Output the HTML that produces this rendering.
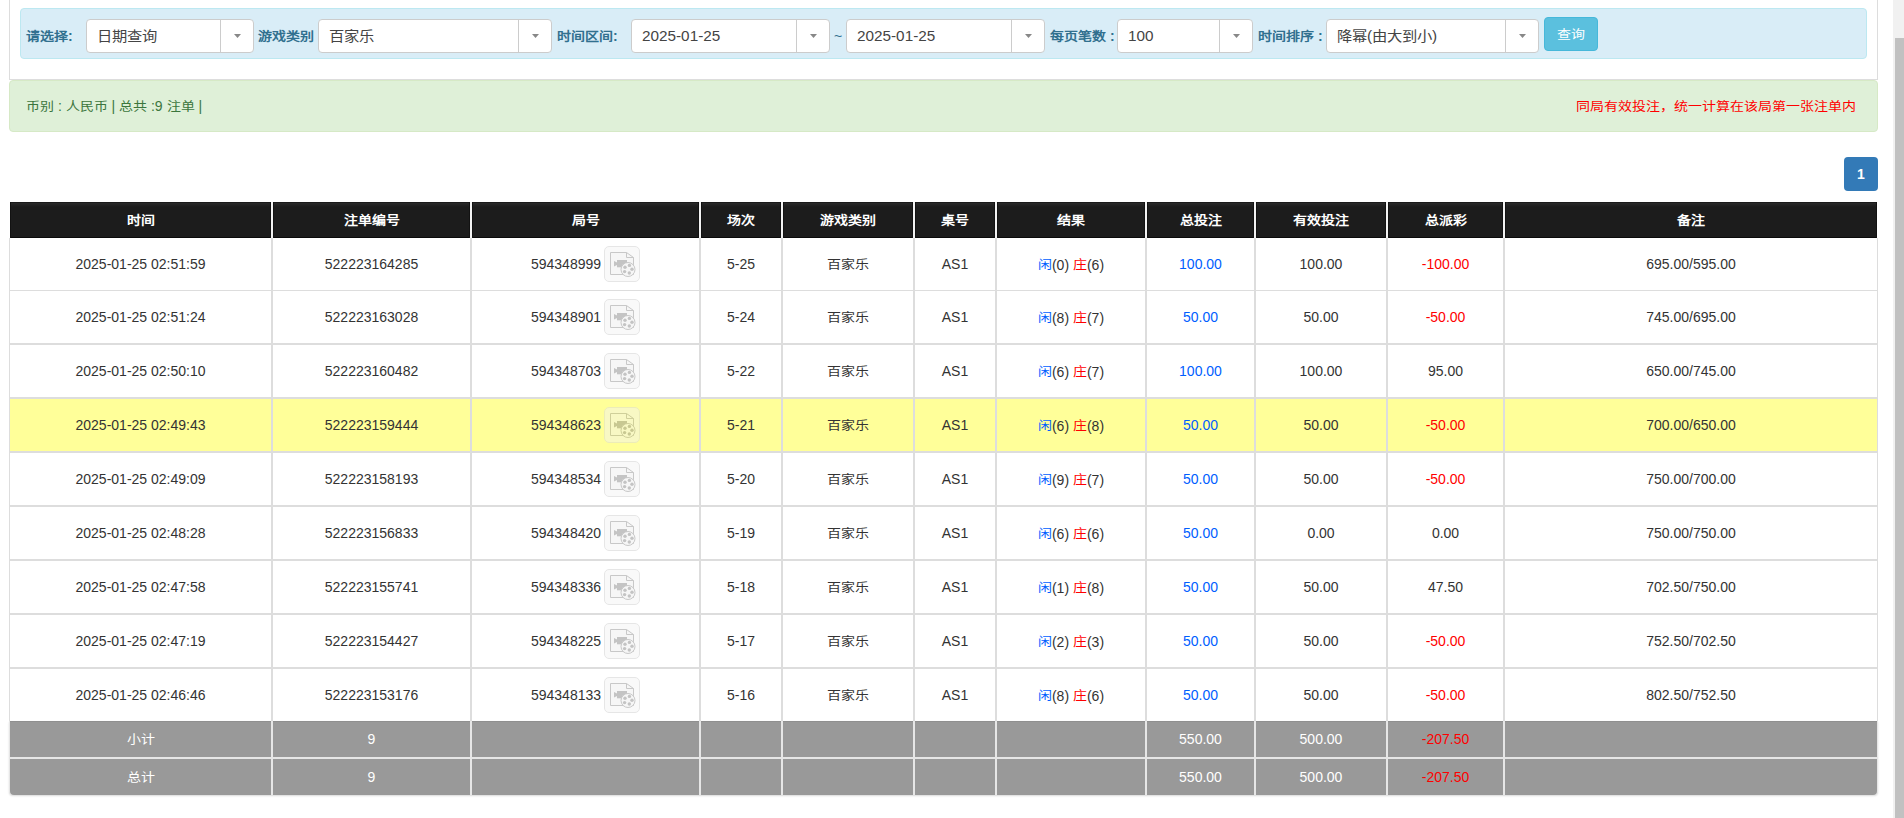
<!DOCTYPE html><html lang="zh-CN"><head><meta charset="utf-8"><title>注单查询</title><style>
html,body{margin:0;padding:0;}
body{width:1904px;height:818px;overflow:hidden;position:relative;background:#fff;font-family:"Liberation Sans", sans-serif;font-size:14px;color:#333;}
.c{position:absolute;display:flex;align-items:center;justify-content:center;white-space:nowrap;}
.lbl{position:absolute;top:19px;height:34px;line-height:34px;font-weight:bold;color:#31708f;font-size:14px;white-space:nowrap;}
.sel{position:absolute;top:19px;height:34px;box-sizing:border-box;border:1px solid #ccc;border-radius:4px;background:#fff;}
.sel .t{position:absolute;left:10px;top:0;line-height:32px;font-size:15.3px;color:#444;white-space:nowrap;}
.sel .d{position:absolute;right:32px;top:0;bottom:0;width:1px;background:#ccc;}
.sel .a{position:absolute;right:12px;top:14px;width:7px;height:4px;}
.z{display:inline-block;transform:translateY(0.5px) scale(1,0.87);}
.c .z{transform:translateY(-0.5px) scale(1,0.87);}
.blue{color:#005eff;}
.red{color:#f00;}
</style></head><body>
<div style="position:absolute;left:9px;top:-10px;width:1869px;height:90px;box-sizing:border-box;border:1px solid #ddd;border-top:none;background:#fff;"></div>
<div style="position:absolute;left:20px;top:8px;width:1847px;height:51px;box-sizing:border-box;border:1px solid #bce8f1;border-radius:4px;background:#d9edf7;"></div>
<div class="lbl" style="left:26px;"><span class="z">请选择</span>:</div>
<div class="lbl" style="left:258px;"><span class="z">游戏类别</span></div>
<div class="lbl" style="left:557px;"><span class="z">时间区间</span>:</div>
<div class="lbl" style="left:1050px;"><span class="z">每页笔数</span> :</div>
<div class="lbl" style="left:1258px;"><span class="z">时间排序</span> :</div>
<div class="lbl" style="left:834px;font-weight:normal;">~</div>
<div class="sel" style="left:86px;width:168px;"><div class="t"><span class="z">日期查询</span></div><div class="d"></div><svg class="a" viewBox="0 0 7 4"><polygon points="0,0 7,0 3.5,4" fill="#888"/></svg></div>
<div class="sel" style="left:318px;width:234px;"><div class="t"><span class="z">百家乐</span></div><div class="d"></div><svg class="a" viewBox="0 0 7 4"><polygon points="0,0 7,0 3.5,4" fill="#888"/></svg></div>
<div class="sel" style="left:631px;width:199px;"><div class="t">2025-01-25</div><div class="d"></div><svg class="a" viewBox="0 0 7 4"><polygon points="0,0 7,0 3.5,4" fill="#888"/></svg></div>
<div class="sel" style="left:846px;width:199px;"><div class="t">2025-01-25</div><div class="d"></div><svg class="a" viewBox="0 0 7 4"><polygon points="0,0 7,0 3.5,4" fill="#888"/></svg></div>
<div class="sel" style="left:1117px;width:136px;"><div class="t">100</div><div class="d"></div><svg class="a" viewBox="0 0 7 4"><polygon points="0,0 7,0 3.5,4" fill="#888"/></svg></div>
<div class="sel" style="left:1326px;width:213px;"><div class="t"><span class="z">降幂</span>(<span class="z">由大到小</span>)</div><div class="d"></div><svg class="a" viewBox="0 0 7 4"><polygon points="0,0 7,0 3.5,4" fill="#888"/></svg></div>
<div style="position:absolute;left:1544px;top:17px;width:54px;height:34px;box-sizing:border-box;border:1px solid #46b8da;border-radius:4px;background:#5bc0de;color:#fff;font-size:14px;line-height:32px;text-align:center;"><span class="z">查询</span></div>
<div style="position:absolute;left:9px;top:80px;width:1869px;height:52px;box-sizing:border-box;border:1px solid #d6e9c6;border-radius:4px;background:#dff0d8;"></div>
<div style="position:absolute;left:26px;top:80px;width:600px;height:52px;line-height:52px;color:#3c763d;white-space:nowrap;"><span class="z">币别</span> : <span class="z">人民币</span> | <span class="z">总共</span> :9 <span class="z">注单</span> |</div>
<div style="position:absolute;left:1456px;top:80px;width:400px;height:52px;line-height:52px;color:#f00;white-space:nowrap;text-align:right;"><span class="z">同局有效投注，统一计算在该局第一张注单内</span></div>
<div style="position:absolute;left:1844px;top:157px;width:34px;height:34px;box-sizing:border-box;border-radius:4px;background:#337ab7;color:#fff;font-size:14px;font-weight:bold;line-height:34px;text-align:center;">1</div>
<div style="position:absolute;left:9px;top:202px;width:1869px;height:36px;background:#f2f2f2;"></div>
<div style="position:absolute;left:9px;top:202px;width:1px;height:36px;background:#fff;"></div>
<div style="position:absolute;left:1877px;top:202px;width:1px;height:36px;background:#fff;"></div>
<div class="c" style="left:10px;top:202px;width:261px;height:36px;background:linear-gradient(#1a1a1a 0,#1a1a1a 1px,#2a2a2a 1px,#222 3px,#1c1c1c 5px);box-shadow:inset 1px 0 #121212,inset -1px 0 #121212,inset 0 -1px #0a0a0a;color:#fff;font-weight:bold;box-sizing:border-box;"><span class="z">时间</span></div>
<div class="c" style="left:273px;top:202px;width:197px;height:36px;background:linear-gradient(#1a1a1a 0,#1a1a1a 1px,#2a2a2a 1px,#222 3px,#1c1c1c 5px);box-shadow:inset 1px 0 #121212,inset -1px 0 #121212,inset 0 -1px #0a0a0a;color:#fff;font-weight:bold;box-sizing:border-box;"><span class="z">注单编号</span></div>
<div class="c" style="left:472px;top:202px;width:227px;height:36px;background:linear-gradient(#1a1a1a 0,#1a1a1a 1px,#2a2a2a 1px,#222 3px,#1c1c1c 5px);box-shadow:inset 1px 0 #121212,inset -1px 0 #121212,inset 0 -1px #0a0a0a;color:#fff;font-weight:bold;box-sizing:border-box;"><span class="z">局号</span></div>
<div class="c" style="left:701px;top:202px;width:80px;height:36px;background:linear-gradient(#1a1a1a 0,#1a1a1a 1px,#2a2a2a 1px,#222 3px,#1c1c1c 5px);box-shadow:inset 1px 0 #121212,inset -1px 0 #121212,inset 0 -1px #0a0a0a;color:#fff;font-weight:bold;box-sizing:border-box;"><span class="z">场次</span></div>
<div class="c" style="left:783px;top:202px;width:130px;height:36px;background:linear-gradient(#1a1a1a 0,#1a1a1a 1px,#2a2a2a 1px,#222 3px,#1c1c1c 5px);box-shadow:inset 1px 0 #121212,inset -1px 0 #121212,inset 0 -1px #0a0a0a;color:#fff;font-weight:bold;box-sizing:border-box;"><span class="z">游戏类别</span></div>
<div class="c" style="left:915px;top:202px;width:80px;height:36px;background:linear-gradient(#1a1a1a 0,#1a1a1a 1px,#2a2a2a 1px,#222 3px,#1c1c1c 5px);box-shadow:inset 1px 0 #121212,inset -1px 0 #121212,inset 0 -1px #0a0a0a;color:#fff;font-weight:bold;box-sizing:border-box;"><span class="z">桌号</span></div>
<div class="c" style="left:997px;top:202px;width:148px;height:36px;background:linear-gradient(#1a1a1a 0,#1a1a1a 1px,#2a2a2a 1px,#222 3px,#1c1c1c 5px);box-shadow:inset 1px 0 #121212,inset -1px 0 #121212,inset 0 -1px #0a0a0a;color:#fff;font-weight:bold;box-sizing:border-box;"><span class="z">结果</span></div>
<div class="c" style="left:1147px;top:202px;width:107px;height:36px;background:linear-gradient(#1a1a1a 0,#1a1a1a 1px,#2a2a2a 1px,#222 3px,#1c1c1c 5px);box-shadow:inset 1px 0 #121212,inset -1px 0 #121212,inset 0 -1px #0a0a0a;color:#fff;font-weight:bold;box-sizing:border-box;"><span class="z">总投注</span></div>
<div class="c" style="left:1256px;top:202px;width:130px;height:36px;background:linear-gradient(#1a1a1a 0,#1a1a1a 1px,#2a2a2a 1px,#222 3px,#1c1c1c 5px);box-shadow:inset 1px 0 #121212,inset -1px 0 #121212,inset 0 -1px #0a0a0a;color:#fff;font-weight:bold;box-sizing:border-box;"><span class="z">有效投注</span></div>
<div class="c" style="left:1388px;top:202px;width:115px;height:36px;background:linear-gradient(#1a1a1a 0,#1a1a1a 1px,#2a2a2a 1px,#222 3px,#1c1c1c 5px);box-shadow:inset 1px 0 #121212,inset -1px 0 #121212,inset 0 -1px #0a0a0a;color:#fff;font-weight:bold;box-sizing:border-box;"><span class="z">总派彩</span></div>
<div class="c" style="left:1505px;top:202px;width:372px;height:36px;background:linear-gradient(#1a1a1a 0,#1a1a1a 1px,#2a2a2a 1px,#222 3px,#1c1c1c 5px);box-shadow:inset 1px 0 #121212,inset -1px 0 #121212,inset 0 -1px #0a0a0a;color:#fff;font-weight:bold;box-sizing:border-box;"><span class="z">备注</span></div>
<div style="position:absolute;left:9px;top:238px;width:1869px;height:483px;background:#ddd;"></div>
<div class="c" style="left:10px;top:238px;width:261px;height:52px;background:#fff;"><span style="white-space:pre">2025-01-25 02:51:59</span></div>
<div class="c" style="left:273px;top:238px;width:197px;height:52px;background:#fff;"><span style="white-space:pre">522223164285</span></div>
<div class="c" style="left:472px;top:238px;width:227px;height:52px;background:#fff;"><span style="display:flex;align-items:center;white-space:pre"><span>594348999</span><span style="margin-left:3px;display:inline-block;"><svg width="36" height="36" viewBox="0 0 36 36" style="display:block"><rect x="0.5" y="0.5" width="35" height="35" rx="4.5" fill="#f9f9f9" stroke="#e6e6e6"/><path d="M6.5 6.5H22.5L29.5 11.5V28.5H6.5Z" fill="#f6f6f6" stroke="#c8c8c8"/><path d="M22.5 6.5V11.5H29.5" fill="none" stroke="#c8c8c8"/><path d="M10 15L13 16.5V19L10 20.5Z" fill="#c4c4c4"/><rect x="13" y="14" width="10" height="7.3" fill="#c4c4c4"/><circle cx="24" cy="23.5" r="7" fill="#f6f6f6" stroke="#c8c8c8"/><g fill="#c4c4c4"><circle cx="21" cy="21.3" r="1.7"/><circle cx="25.4" cy="19.4" r="1.7"/><circle cx="28" cy="23.2" r="1.7"/><circle cx="25.3" cy="27" r="1.7"/><circle cx="20.6" cy="25.6" r="1.7"/></g></svg></span></span></div>
<div class="c" style="left:701px;top:238px;width:80px;height:52px;background:#fff;"><span style="white-space:pre">5-25</span></div>
<div class="c" style="left:783px;top:238px;width:130px;height:52px;background:#fff;"><span style="white-space:pre"><span class="z">百家乐</span></span></div>
<div class="c" style="left:915px;top:238px;width:80px;height:52px;background:#fff;"><span style="white-space:pre">AS1</span></div>
<div class="c" style="left:997px;top:238px;width:148px;height:52px;background:#fff;"><span style="white-space:pre"><span class="blue"><span class="z">闲</span></span>(0) <span class="red"><span class="z">庄</span></span>(6)</span></div>
<div class="c" style="left:1147px;top:238px;width:107px;height:52px;background:#fff;"><span style="white-space:pre"><span class="blue">100.00</span></span></div>
<div class="c" style="left:1256px;top:238px;width:130px;height:52px;background:#fff;"><span style="white-space:pre">100.00</span></div>
<div class="c" style="left:1388px;top:238px;width:115px;height:52px;background:#fff;"><span style="white-space:pre"><span class="red">-100.00</span></span></div>
<div class="c" style="left:1505px;top:238px;width:372px;height:52px;background:#fff;"><span style="white-space:pre">695.00/595.00</span></div>
<div class="c" style="left:10px;top:291px;width:261px;height:52px;background:#fff;"><span style="white-space:pre">2025-01-25 02:51:24</span></div>
<div class="c" style="left:273px;top:291px;width:197px;height:52px;background:#fff;"><span style="white-space:pre">522223163028</span></div>
<div class="c" style="left:472px;top:291px;width:227px;height:52px;background:#fff;"><span style="display:flex;align-items:center;white-space:pre"><span>594348901</span><span style="margin-left:3px;display:inline-block;"><svg width="36" height="36" viewBox="0 0 36 36" style="display:block"><rect x="0.5" y="0.5" width="35" height="35" rx="4.5" fill="#f9f9f9" stroke="#e6e6e6"/><path d="M6.5 6.5H22.5L29.5 11.5V28.5H6.5Z" fill="#f6f6f6" stroke="#c8c8c8"/><path d="M22.5 6.5V11.5H29.5" fill="none" stroke="#c8c8c8"/><path d="M10 15L13 16.5V19L10 20.5Z" fill="#c4c4c4"/><rect x="13" y="14" width="10" height="7.3" fill="#c4c4c4"/><circle cx="24" cy="23.5" r="7" fill="#f6f6f6" stroke="#c8c8c8"/><g fill="#c4c4c4"><circle cx="21" cy="21.3" r="1.7"/><circle cx="25.4" cy="19.4" r="1.7"/><circle cx="28" cy="23.2" r="1.7"/><circle cx="25.3" cy="27" r="1.7"/><circle cx="20.6" cy="25.6" r="1.7"/></g></svg></span></span></div>
<div class="c" style="left:701px;top:291px;width:80px;height:52px;background:#fff;"><span style="white-space:pre">5-24</span></div>
<div class="c" style="left:783px;top:291px;width:130px;height:52px;background:#fff;"><span style="white-space:pre"><span class="z">百家乐</span></span></div>
<div class="c" style="left:915px;top:291px;width:80px;height:52px;background:#fff;"><span style="white-space:pre">AS1</span></div>
<div class="c" style="left:997px;top:291px;width:148px;height:52px;background:#fff;"><span style="white-space:pre"><span class="blue"><span class="z">闲</span></span>(8) <span class="red"><span class="z">庄</span></span>(7)</span></div>
<div class="c" style="left:1147px;top:291px;width:107px;height:52px;background:#fff;"><span style="white-space:pre"><span class="blue">50.00</span></span></div>
<div class="c" style="left:1256px;top:291px;width:130px;height:52px;background:#fff;"><span style="white-space:pre">50.00</span></div>
<div class="c" style="left:1388px;top:291px;width:115px;height:52px;background:#fff;"><span style="white-space:pre"><span class="red">-50.00</span></span></div>
<div class="c" style="left:1505px;top:291px;width:372px;height:52px;background:#fff;"><span style="white-space:pre">745.00/695.00</span></div>
<div class="c" style="left:10px;top:345px;width:261px;height:52px;background:#fff;"><span style="white-space:pre">2025-01-25 02:50:10</span></div>
<div class="c" style="left:273px;top:345px;width:197px;height:52px;background:#fff;"><span style="white-space:pre">522223160482</span></div>
<div class="c" style="left:472px;top:345px;width:227px;height:52px;background:#fff;"><span style="display:flex;align-items:center;white-space:pre"><span>594348703</span><span style="margin-left:3px;display:inline-block;"><svg width="36" height="36" viewBox="0 0 36 36" style="display:block"><rect x="0.5" y="0.5" width="35" height="35" rx="4.5" fill="#f9f9f9" stroke="#e6e6e6"/><path d="M6.5 6.5H22.5L29.5 11.5V28.5H6.5Z" fill="#f6f6f6" stroke="#c8c8c8"/><path d="M22.5 6.5V11.5H29.5" fill="none" stroke="#c8c8c8"/><path d="M10 15L13 16.5V19L10 20.5Z" fill="#c4c4c4"/><rect x="13" y="14" width="10" height="7.3" fill="#c4c4c4"/><circle cx="24" cy="23.5" r="7" fill="#f6f6f6" stroke="#c8c8c8"/><g fill="#c4c4c4"><circle cx="21" cy="21.3" r="1.7"/><circle cx="25.4" cy="19.4" r="1.7"/><circle cx="28" cy="23.2" r="1.7"/><circle cx="25.3" cy="27" r="1.7"/><circle cx="20.6" cy="25.6" r="1.7"/></g></svg></span></span></div>
<div class="c" style="left:701px;top:345px;width:80px;height:52px;background:#fff;"><span style="white-space:pre">5-22</span></div>
<div class="c" style="left:783px;top:345px;width:130px;height:52px;background:#fff;"><span style="white-space:pre"><span class="z">百家乐</span></span></div>
<div class="c" style="left:915px;top:345px;width:80px;height:52px;background:#fff;"><span style="white-space:pre">AS1</span></div>
<div class="c" style="left:997px;top:345px;width:148px;height:52px;background:#fff;"><span style="white-space:pre"><span class="blue"><span class="z">闲</span></span>(6) <span class="red"><span class="z">庄</span></span>(7)</span></div>
<div class="c" style="left:1147px;top:345px;width:107px;height:52px;background:#fff;"><span style="white-space:pre"><span class="blue">100.00</span></span></div>
<div class="c" style="left:1256px;top:345px;width:130px;height:52px;background:#fff;"><span style="white-space:pre">100.00</span></div>
<div class="c" style="left:1388px;top:345px;width:115px;height:52px;background:#fff;"><span style="white-space:pre"><span class="">95.00</span></span></div>
<div class="c" style="left:1505px;top:345px;width:372px;height:52px;background:#fff;"><span style="white-space:pre">650.00/745.00</span></div>
<div class="c" style="left:10px;top:399px;width:261px;height:52px;background:#ffff99;"><span style="white-space:pre">2025-01-25 02:49:43</span></div>
<div class="c" style="left:273px;top:399px;width:197px;height:52px;background:#ffff99;"><span style="white-space:pre">522223159444</span></div>
<div class="c" style="left:472px;top:399px;width:227px;height:52px;background:#ffff99;"><span style="display:flex;align-items:center;white-space:pre"><span>594348623</span><span style="margin-left:3px;display:inline-block;"><svg width="36" height="36" viewBox="0 0 36 36" style="display:block"><rect x="0.5" y="0.5" width="35" height="35" rx="4.5" fill="#f8f8c4" stroke="#ececb8"/><path d="M6.5 6.5H22.5L29.5 11.5V28.5H6.5Z" fill="#f8f8c4" stroke="#cfcf9a"/><path d="M22.5 6.5V11.5H29.5" fill="none" stroke="#cfcf9a"/><path d="M10 15L13 16.5V19L10 20.5Z" fill="#c8c892"/><rect x="13" y="14" width="10" height="7.3" fill="#c8c892"/><circle cx="24" cy="23.5" r="7" fill="#f8f8c4" stroke="#cfcf9a"/><g fill="#c8c892"><circle cx="21" cy="21.3" r="1.7"/><circle cx="25.4" cy="19.4" r="1.7"/><circle cx="28" cy="23.2" r="1.7"/><circle cx="25.3" cy="27" r="1.7"/><circle cx="20.6" cy="25.6" r="1.7"/></g></svg></span></span></div>
<div class="c" style="left:701px;top:399px;width:80px;height:52px;background:#ffff99;"><span style="white-space:pre">5-21</span></div>
<div class="c" style="left:783px;top:399px;width:130px;height:52px;background:#ffff99;"><span style="white-space:pre"><span class="z">百家乐</span></span></div>
<div class="c" style="left:915px;top:399px;width:80px;height:52px;background:#ffff99;"><span style="white-space:pre">AS1</span></div>
<div class="c" style="left:997px;top:399px;width:148px;height:52px;background:#ffff99;"><span style="white-space:pre"><span class="blue"><span class="z">闲</span></span>(6) <span class="red"><span class="z">庄</span></span>(8)</span></div>
<div class="c" style="left:1147px;top:399px;width:107px;height:52px;background:#ffff99;"><span style="white-space:pre"><span class="blue">50.00</span></span></div>
<div class="c" style="left:1256px;top:399px;width:130px;height:52px;background:#ffff99;"><span style="white-space:pre">50.00</span></div>
<div class="c" style="left:1388px;top:399px;width:115px;height:52px;background:#ffff99;"><span style="white-space:pre"><span class="red">-50.00</span></span></div>
<div class="c" style="left:1505px;top:399px;width:372px;height:52px;background:#ffff99;"><span style="white-space:pre">700.00/650.00</span></div>
<div class="c" style="left:10px;top:453px;width:261px;height:52px;background:#fff;"><span style="white-space:pre">2025-01-25 02:49:09</span></div>
<div class="c" style="left:273px;top:453px;width:197px;height:52px;background:#fff;"><span style="white-space:pre">522223158193</span></div>
<div class="c" style="left:472px;top:453px;width:227px;height:52px;background:#fff;"><span style="display:flex;align-items:center;white-space:pre"><span>594348534</span><span style="margin-left:3px;display:inline-block;"><svg width="36" height="36" viewBox="0 0 36 36" style="display:block"><rect x="0.5" y="0.5" width="35" height="35" rx="4.5" fill="#f9f9f9" stroke="#e6e6e6"/><path d="M6.5 6.5H22.5L29.5 11.5V28.5H6.5Z" fill="#f6f6f6" stroke="#c8c8c8"/><path d="M22.5 6.5V11.5H29.5" fill="none" stroke="#c8c8c8"/><path d="M10 15L13 16.5V19L10 20.5Z" fill="#c4c4c4"/><rect x="13" y="14" width="10" height="7.3" fill="#c4c4c4"/><circle cx="24" cy="23.5" r="7" fill="#f6f6f6" stroke="#c8c8c8"/><g fill="#c4c4c4"><circle cx="21" cy="21.3" r="1.7"/><circle cx="25.4" cy="19.4" r="1.7"/><circle cx="28" cy="23.2" r="1.7"/><circle cx="25.3" cy="27" r="1.7"/><circle cx="20.6" cy="25.6" r="1.7"/></g></svg></span></span></div>
<div class="c" style="left:701px;top:453px;width:80px;height:52px;background:#fff;"><span style="white-space:pre">5-20</span></div>
<div class="c" style="left:783px;top:453px;width:130px;height:52px;background:#fff;"><span style="white-space:pre"><span class="z">百家乐</span></span></div>
<div class="c" style="left:915px;top:453px;width:80px;height:52px;background:#fff;"><span style="white-space:pre">AS1</span></div>
<div class="c" style="left:997px;top:453px;width:148px;height:52px;background:#fff;"><span style="white-space:pre"><span class="blue"><span class="z">闲</span></span>(9) <span class="red"><span class="z">庄</span></span>(7)</span></div>
<div class="c" style="left:1147px;top:453px;width:107px;height:52px;background:#fff;"><span style="white-space:pre"><span class="blue">50.00</span></span></div>
<div class="c" style="left:1256px;top:453px;width:130px;height:52px;background:#fff;"><span style="white-space:pre">50.00</span></div>
<div class="c" style="left:1388px;top:453px;width:115px;height:52px;background:#fff;"><span style="white-space:pre"><span class="red">-50.00</span></span></div>
<div class="c" style="left:1505px;top:453px;width:372px;height:52px;background:#fff;"><span style="white-space:pre">750.00/700.00</span></div>
<div class="c" style="left:10px;top:507px;width:261px;height:52px;background:#fff;"><span style="white-space:pre">2025-01-25 02:48:28</span></div>
<div class="c" style="left:273px;top:507px;width:197px;height:52px;background:#fff;"><span style="white-space:pre">522223156833</span></div>
<div class="c" style="left:472px;top:507px;width:227px;height:52px;background:#fff;"><span style="display:flex;align-items:center;white-space:pre"><span>594348420</span><span style="margin-left:3px;display:inline-block;"><svg width="36" height="36" viewBox="0 0 36 36" style="display:block"><rect x="0.5" y="0.5" width="35" height="35" rx="4.5" fill="#f9f9f9" stroke="#e6e6e6"/><path d="M6.5 6.5H22.5L29.5 11.5V28.5H6.5Z" fill="#f6f6f6" stroke="#c8c8c8"/><path d="M22.5 6.5V11.5H29.5" fill="none" stroke="#c8c8c8"/><path d="M10 15L13 16.5V19L10 20.5Z" fill="#c4c4c4"/><rect x="13" y="14" width="10" height="7.3" fill="#c4c4c4"/><circle cx="24" cy="23.5" r="7" fill="#f6f6f6" stroke="#c8c8c8"/><g fill="#c4c4c4"><circle cx="21" cy="21.3" r="1.7"/><circle cx="25.4" cy="19.4" r="1.7"/><circle cx="28" cy="23.2" r="1.7"/><circle cx="25.3" cy="27" r="1.7"/><circle cx="20.6" cy="25.6" r="1.7"/></g></svg></span></span></div>
<div class="c" style="left:701px;top:507px;width:80px;height:52px;background:#fff;"><span style="white-space:pre">5-19</span></div>
<div class="c" style="left:783px;top:507px;width:130px;height:52px;background:#fff;"><span style="white-space:pre"><span class="z">百家乐</span></span></div>
<div class="c" style="left:915px;top:507px;width:80px;height:52px;background:#fff;"><span style="white-space:pre">AS1</span></div>
<div class="c" style="left:997px;top:507px;width:148px;height:52px;background:#fff;"><span style="white-space:pre"><span class="blue"><span class="z">闲</span></span>(6) <span class="red"><span class="z">庄</span></span>(6)</span></div>
<div class="c" style="left:1147px;top:507px;width:107px;height:52px;background:#fff;"><span style="white-space:pre"><span class="blue">50.00</span></span></div>
<div class="c" style="left:1256px;top:507px;width:130px;height:52px;background:#fff;"><span style="white-space:pre">0.00</span></div>
<div class="c" style="left:1388px;top:507px;width:115px;height:52px;background:#fff;"><span style="white-space:pre"><span class="">0.00</span></span></div>
<div class="c" style="left:1505px;top:507px;width:372px;height:52px;background:#fff;"><span style="white-space:pre">750.00/750.00</span></div>
<div class="c" style="left:10px;top:561px;width:261px;height:52px;background:#fff;"><span style="white-space:pre">2025-01-25 02:47:58</span></div>
<div class="c" style="left:273px;top:561px;width:197px;height:52px;background:#fff;"><span style="white-space:pre">522223155741</span></div>
<div class="c" style="left:472px;top:561px;width:227px;height:52px;background:#fff;"><span style="display:flex;align-items:center;white-space:pre"><span>594348336</span><span style="margin-left:3px;display:inline-block;"><svg width="36" height="36" viewBox="0 0 36 36" style="display:block"><rect x="0.5" y="0.5" width="35" height="35" rx="4.5" fill="#f9f9f9" stroke="#e6e6e6"/><path d="M6.5 6.5H22.5L29.5 11.5V28.5H6.5Z" fill="#f6f6f6" stroke="#c8c8c8"/><path d="M22.5 6.5V11.5H29.5" fill="none" stroke="#c8c8c8"/><path d="M10 15L13 16.5V19L10 20.5Z" fill="#c4c4c4"/><rect x="13" y="14" width="10" height="7.3" fill="#c4c4c4"/><circle cx="24" cy="23.5" r="7" fill="#f6f6f6" stroke="#c8c8c8"/><g fill="#c4c4c4"><circle cx="21" cy="21.3" r="1.7"/><circle cx="25.4" cy="19.4" r="1.7"/><circle cx="28" cy="23.2" r="1.7"/><circle cx="25.3" cy="27" r="1.7"/><circle cx="20.6" cy="25.6" r="1.7"/></g></svg></span></span></div>
<div class="c" style="left:701px;top:561px;width:80px;height:52px;background:#fff;"><span style="white-space:pre">5-18</span></div>
<div class="c" style="left:783px;top:561px;width:130px;height:52px;background:#fff;"><span style="white-space:pre"><span class="z">百家乐</span></span></div>
<div class="c" style="left:915px;top:561px;width:80px;height:52px;background:#fff;"><span style="white-space:pre">AS1</span></div>
<div class="c" style="left:997px;top:561px;width:148px;height:52px;background:#fff;"><span style="white-space:pre"><span class="blue"><span class="z">闲</span></span>(1) <span class="red"><span class="z">庄</span></span>(8)</span></div>
<div class="c" style="left:1147px;top:561px;width:107px;height:52px;background:#fff;"><span style="white-space:pre"><span class="blue">50.00</span></span></div>
<div class="c" style="left:1256px;top:561px;width:130px;height:52px;background:#fff;"><span style="white-space:pre">50.00</span></div>
<div class="c" style="left:1388px;top:561px;width:115px;height:52px;background:#fff;"><span style="white-space:pre"><span class="">47.50</span></span></div>
<div class="c" style="left:1505px;top:561px;width:372px;height:52px;background:#fff;"><span style="white-space:pre">702.50/750.00</span></div>
<div class="c" style="left:10px;top:615px;width:261px;height:52px;background:#fff;"><span style="white-space:pre">2025-01-25 02:47:19</span></div>
<div class="c" style="left:273px;top:615px;width:197px;height:52px;background:#fff;"><span style="white-space:pre">522223154427</span></div>
<div class="c" style="left:472px;top:615px;width:227px;height:52px;background:#fff;"><span style="display:flex;align-items:center;white-space:pre"><span>594348225</span><span style="margin-left:3px;display:inline-block;"><svg width="36" height="36" viewBox="0 0 36 36" style="display:block"><rect x="0.5" y="0.5" width="35" height="35" rx="4.5" fill="#f9f9f9" stroke="#e6e6e6"/><path d="M6.5 6.5H22.5L29.5 11.5V28.5H6.5Z" fill="#f6f6f6" stroke="#c8c8c8"/><path d="M22.5 6.5V11.5H29.5" fill="none" stroke="#c8c8c8"/><path d="M10 15L13 16.5V19L10 20.5Z" fill="#c4c4c4"/><rect x="13" y="14" width="10" height="7.3" fill="#c4c4c4"/><circle cx="24" cy="23.5" r="7" fill="#f6f6f6" stroke="#c8c8c8"/><g fill="#c4c4c4"><circle cx="21" cy="21.3" r="1.7"/><circle cx="25.4" cy="19.4" r="1.7"/><circle cx="28" cy="23.2" r="1.7"/><circle cx="25.3" cy="27" r="1.7"/><circle cx="20.6" cy="25.6" r="1.7"/></g></svg></span></span></div>
<div class="c" style="left:701px;top:615px;width:80px;height:52px;background:#fff;"><span style="white-space:pre">5-17</span></div>
<div class="c" style="left:783px;top:615px;width:130px;height:52px;background:#fff;"><span style="white-space:pre"><span class="z">百家乐</span></span></div>
<div class="c" style="left:915px;top:615px;width:80px;height:52px;background:#fff;"><span style="white-space:pre">AS1</span></div>
<div class="c" style="left:997px;top:615px;width:148px;height:52px;background:#fff;"><span style="white-space:pre"><span class="blue"><span class="z">闲</span></span>(2) <span class="red"><span class="z">庄</span></span>(3)</span></div>
<div class="c" style="left:1147px;top:615px;width:107px;height:52px;background:#fff;"><span style="white-space:pre"><span class="blue">50.00</span></span></div>
<div class="c" style="left:1256px;top:615px;width:130px;height:52px;background:#fff;"><span style="white-space:pre">50.00</span></div>
<div class="c" style="left:1388px;top:615px;width:115px;height:52px;background:#fff;"><span style="white-space:pre"><span class="red">-50.00</span></span></div>
<div class="c" style="left:1505px;top:615px;width:372px;height:52px;background:#fff;"><span style="white-space:pre">752.50/702.50</span></div>
<div class="c" style="left:10px;top:669px;width:261px;height:52px;background:#fff;"><span style="white-space:pre">2025-01-25 02:46:46</span></div>
<div class="c" style="left:273px;top:669px;width:197px;height:52px;background:#fff;"><span style="white-space:pre">522223153176</span></div>
<div class="c" style="left:472px;top:669px;width:227px;height:52px;background:#fff;"><span style="display:flex;align-items:center;white-space:pre"><span>594348133</span><span style="margin-left:3px;display:inline-block;"><svg width="36" height="36" viewBox="0 0 36 36" style="display:block"><rect x="0.5" y="0.5" width="35" height="35" rx="4.5" fill="#f9f9f9" stroke="#e6e6e6"/><path d="M6.5 6.5H22.5L29.5 11.5V28.5H6.5Z" fill="#f6f6f6" stroke="#c8c8c8"/><path d="M22.5 6.5V11.5H29.5" fill="none" stroke="#c8c8c8"/><path d="M10 15L13 16.5V19L10 20.5Z" fill="#c4c4c4"/><rect x="13" y="14" width="10" height="7.3" fill="#c4c4c4"/><circle cx="24" cy="23.5" r="7" fill="#f6f6f6" stroke="#c8c8c8"/><g fill="#c4c4c4"><circle cx="21" cy="21.3" r="1.7"/><circle cx="25.4" cy="19.4" r="1.7"/><circle cx="28" cy="23.2" r="1.7"/><circle cx="25.3" cy="27" r="1.7"/><circle cx="20.6" cy="25.6" r="1.7"/></g></svg></span></span></div>
<div class="c" style="left:701px;top:669px;width:80px;height:52px;background:#fff;"><span style="white-space:pre">5-16</span></div>
<div class="c" style="left:783px;top:669px;width:130px;height:52px;background:#fff;"><span style="white-space:pre"><span class="z">百家乐</span></span></div>
<div class="c" style="left:915px;top:669px;width:80px;height:52px;background:#fff;"><span style="white-space:pre">AS1</span></div>
<div class="c" style="left:997px;top:669px;width:148px;height:52px;background:#fff;"><span style="white-space:pre"><span class="blue"><span class="z">闲</span></span>(8) <span class="red"><span class="z">庄</span></span>(6)</span></div>
<div class="c" style="left:1147px;top:669px;width:107px;height:52px;background:#fff;"><span style="white-space:pre"><span class="blue">50.00</span></span></div>
<div class="c" style="left:1256px;top:669px;width:130px;height:52px;background:#fff;"><span style="white-space:pre">50.00</span></div>
<div class="c" style="left:1388px;top:669px;width:115px;height:52px;background:#fff;"><span style="white-space:pre"><span class="red">-50.00</span></span></div>
<div class="c" style="left:1505px;top:669px;width:372px;height:52px;background:#fff;"><span style="white-space:pre">802.50/752.50</span></div>
<div style="position:absolute;left:9px;top:721px;width:1869px;height:74px;background:#e6e6e6;border-radius:0 0 4px 4px;box-shadow:0 1px 2px rgba(0,0,0,.15);"></div>
<div class="c" style="left:10px;top:721px;width:261px;height:36px;background:#999;color:#fff;box-shadow:inset 0 1px #8f8f8f;"><span class="z">小计</span></div>
<div class="c" style="left:273px;top:721px;width:197px;height:36px;background:#999;color:#fff;box-shadow:inset 0 1px #8f8f8f;">9</div>
<div class="c" style="left:472px;top:721px;width:227px;height:36px;background:#999;color:#fff;box-shadow:inset 0 1px #8f8f8f;"></div>
<div class="c" style="left:701px;top:721px;width:80px;height:36px;background:#999;color:#fff;box-shadow:inset 0 1px #8f8f8f;"></div>
<div class="c" style="left:783px;top:721px;width:130px;height:36px;background:#999;color:#fff;box-shadow:inset 0 1px #8f8f8f;"></div>
<div class="c" style="left:915px;top:721px;width:80px;height:36px;background:#999;color:#fff;box-shadow:inset 0 1px #8f8f8f;"></div>
<div class="c" style="left:997px;top:721px;width:148px;height:36px;background:#999;color:#fff;box-shadow:inset 0 1px #8f8f8f;"></div>
<div class="c" style="left:1147px;top:721px;width:107px;height:36px;background:#999;color:#fff;box-shadow:inset 0 1px #8f8f8f;">550.00</div>
<div class="c" style="left:1256px;top:721px;width:130px;height:36px;background:#999;color:#fff;box-shadow:inset 0 1px #8f8f8f;">500.00</div>
<div class="c" style="left:1388px;top:721px;width:115px;height:36px;background:#999;color:#fff;box-shadow:inset 0 1px #8f8f8f;"><span class="red">-207.50</span></div>
<div class="c" style="left:1505px;top:721px;width:372px;height:36px;background:#999;color:#fff;box-shadow:inset 0 1px #8f8f8f;"></div>
<div class="c" style="left:10px;top:759px;width:261px;height:36px;background:#999;color:#fff;border-bottom-left-radius:4px;"><span class="z">总计</span></div>
<div class="c" style="left:273px;top:759px;width:197px;height:36px;background:#999;color:#fff;">9</div>
<div class="c" style="left:472px;top:759px;width:227px;height:36px;background:#999;color:#fff;"></div>
<div class="c" style="left:701px;top:759px;width:80px;height:36px;background:#999;color:#fff;"></div>
<div class="c" style="left:783px;top:759px;width:130px;height:36px;background:#999;color:#fff;"></div>
<div class="c" style="left:915px;top:759px;width:80px;height:36px;background:#999;color:#fff;"></div>
<div class="c" style="left:997px;top:759px;width:148px;height:36px;background:#999;color:#fff;"></div>
<div class="c" style="left:1147px;top:759px;width:107px;height:36px;background:#999;color:#fff;">550.00</div>
<div class="c" style="left:1256px;top:759px;width:130px;height:36px;background:#999;color:#fff;">500.00</div>
<div class="c" style="left:1388px;top:759px;width:115px;height:36px;background:#999;color:#fff;"><span class="red">-207.50</span></div>
<div class="c" style="left:1505px;top:759px;width:372px;height:36px;background:#999;color:#fff;border-bottom-right-radius:4px;"></div>
<div style="position:absolute;left:1893px;top:0px;width:11px;height:818px;background:#f1f1f1;"></div>
<div style="position:absolute;left:1895px;top:38px;width:9px;height:780px;background:#c1c1c1;"></div>
</body></html>
